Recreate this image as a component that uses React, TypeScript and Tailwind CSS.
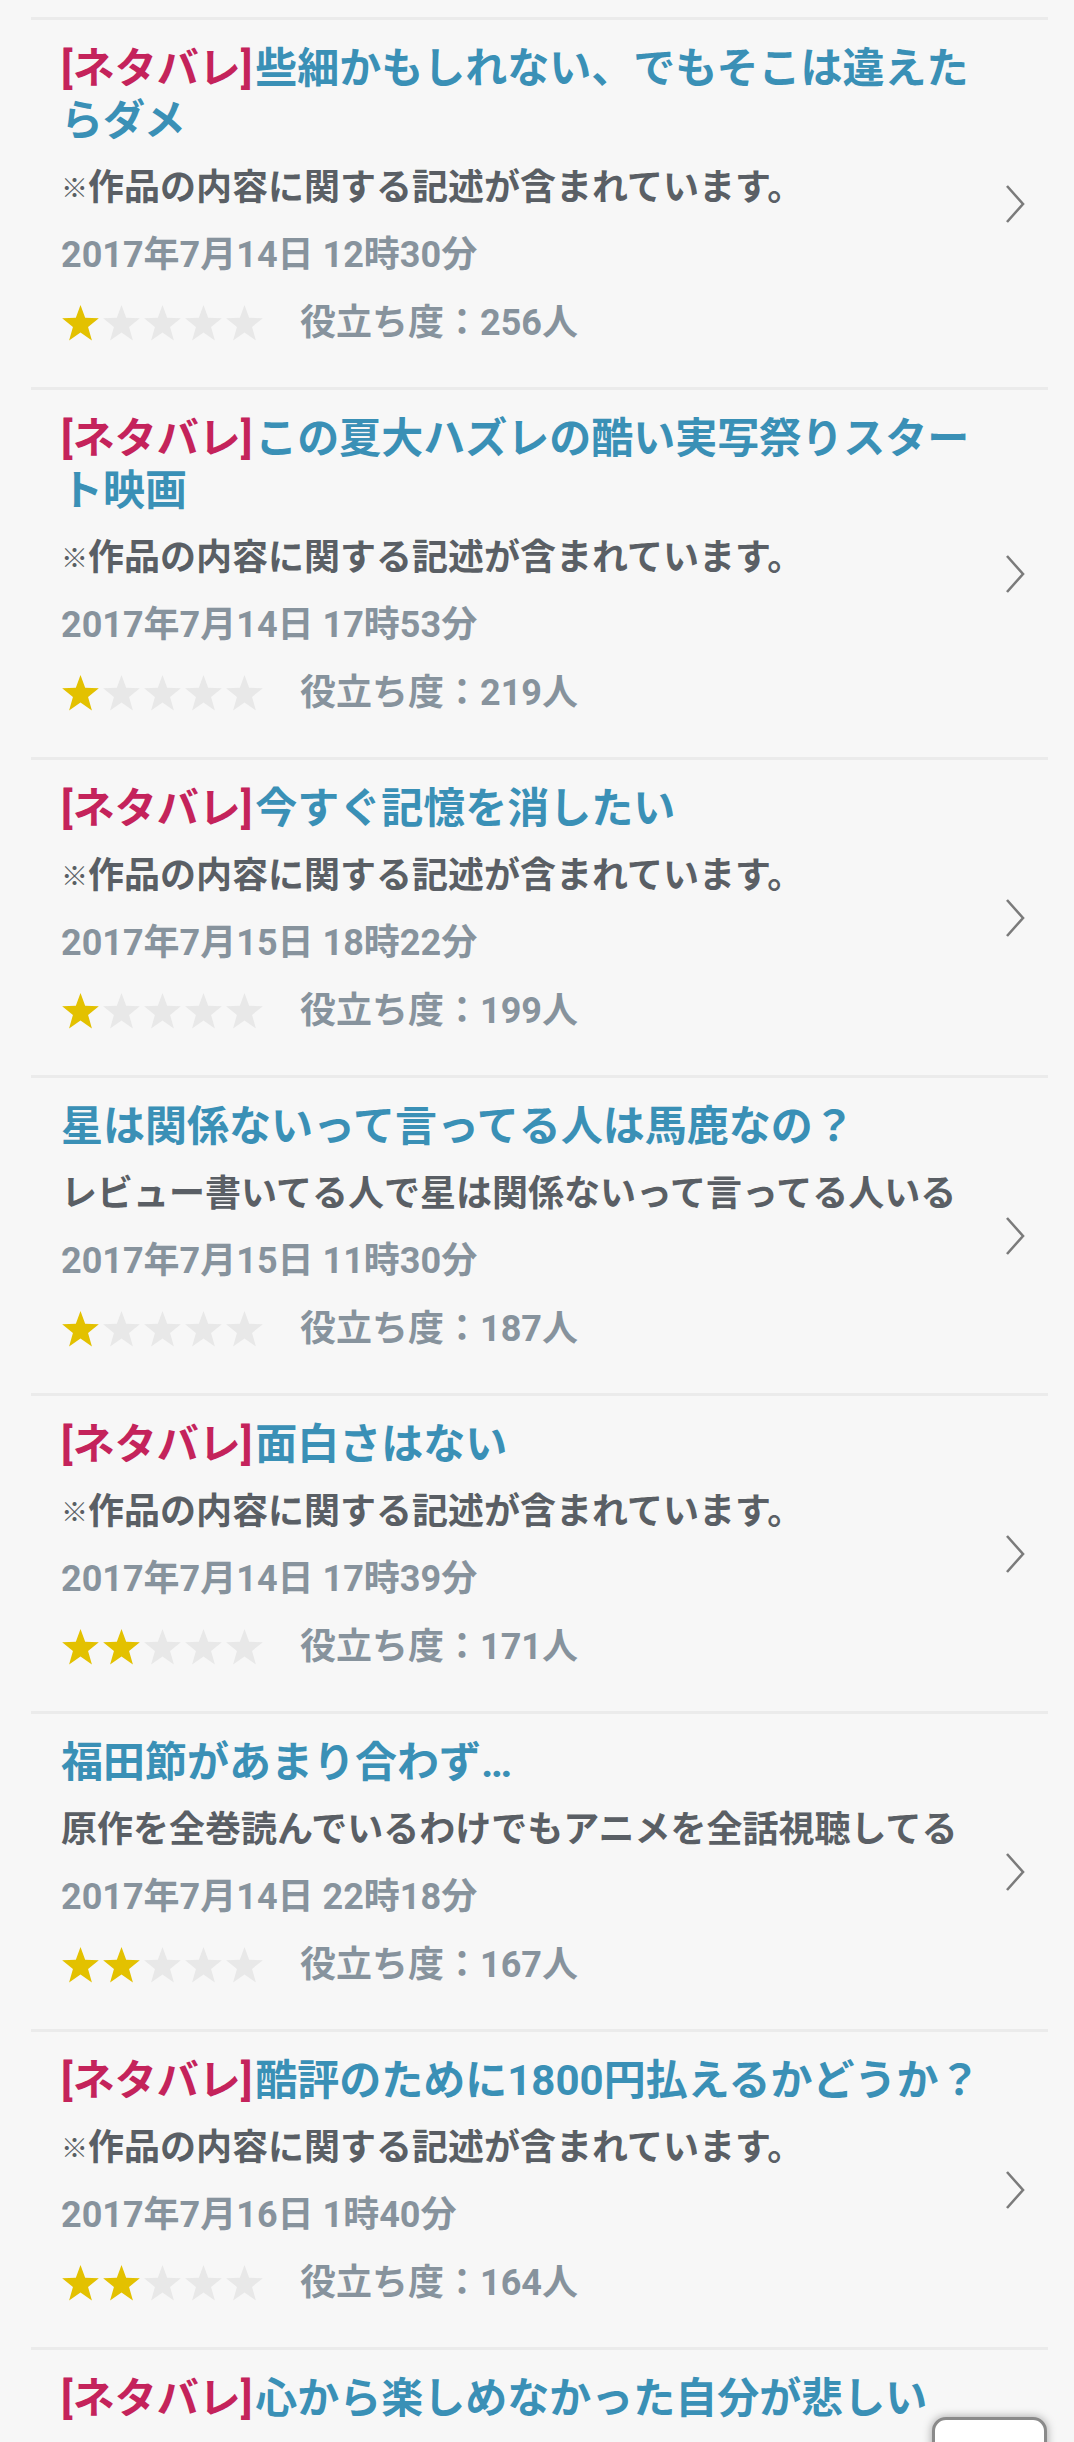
import React from 'react';

interface Review {
  id: number;
  spoiler: boolean;
  title: string;
  body: string;
  date: string;
  stars: number;
  helpful: number;
}

const SPOILER_NOTE = '※作品の内容に関する記述が含まれています。';

const reviews: Review[] = [
  { id: 1, spoiler: true, title: '些細かもしれない、でもそこは違えたらダメ', body: SPOILER_NOTE, date: '2017年7月14日 12時30分', stars: 1, helpful: 256 },
  { id: 2, spoiler: true, title: 'この夏大ハズレの酷い実写祭りスタート映画', body: SPOILER_NOTE, date: '2017年7月14日 17時53分', stars: 1, helpful: 219 },
  { id: 3, spoiler: true, title: '今すぐ記憶を消したい', body: SPOILER_NOTE, date: '2017年7月15日 18時22分', stars: 1, helpful: 199 },
  { id: 4, spoiler: false, title: '星は関係ないって言ってる人は馬鹿なの？', body: 'レビュー書いてる人で星は関係ないって言ってる人いる', date: '2017年7月15日 11時30分', stars: 1, helpful: 187 },
  { id: 5, spoiler: true, title: '面白さはない', body: SPOILER_NOTE, date: '2017年7月14日 17時39分', stars: 2, helpful: 171 },
  { id: 6, spoiler: false, title: '福田節があまり合わず…', body: '原作を全巻読んでいるわけでもアニメを全話視聴してる', date: '2017年7月14日 22時18分', stars: 2, helpful: 167 },
  { id: 7, spoiler: true, title: '酷評のために1800円払えるかどうか？', body: SPOILER_NOTE, date: '2017年7月16日 1時40分', stars: 2, helpful: 164 },
  { id: 8, spoiler: true, title: '心から楽しめなかった自分が悲しい', body: SPOILER_NOTE, date: '2017年7月15日 9時12分', stars: 2, helpful: 158 },
];

function Star({ filled }: { filled: boolean }) {
  return (
    <svg width="39" height="37" viewBox="0 0 24 23" className="shrink-0">
      <polygon
        points="12,0 14.9,8 23.4,8.3 16.7,13.6 19.1,22 12,17.1 4.9,22 7.3,13.6 0.6,8.3 9.1,8"
        fill={filled ? '#e3c100' : '#e8e8e8'}
      />
    </svg>
  );
}

function Chevron() {
  return (
    <svg width="22" height="40" viewBox="0 0 22 40" className="shrink-0">
      <polyline points="3,2 19,20 3,38" fill="none" stroke="#7b7b7b" strokeWidth="2.6" />
    </svg>
  );
}

function Body({ text }: { text: string }) {
  if (text.startsWith('※')) {
    return (
      <>
        <span className="text-[27px] leading-none align-[2px]">※</span>
        {text.slice(1)}
      </>
    );
  }
  return <>{text}</>;
}

function ReviewRow({ review }: { review: Review }) {
  return (
    <div className="border-t-[3px] border-[#ebebeb] flex items-center pl-[30px] pr-[22px]">
      <div className="w-[935px] pt-[23px] pb-[39px]">
        <h3 className="text-[42px] leading-[52px] font-bold text-[#3a90b6]">
          {review.spoiler && <span className="text-[#c4235b] mr-[3px]">[ネタバレ]</span>}
          {review.title}
        </h3>
        <p className="mt-[16px] h-[50px] text-[36px] leading-[50px] font-bold text-[#5a5f65] whitespace-nowrap">
          <Body text={review.body} />
        </p>
        <p className="mt-[17px] h-[50px] text-[36px] leading-[50px] font-bold text-[#87939d]">{review.date}</p>
        <div className="mt-[18px] h-[50px] flex items-center">
          <div className="flex items-center gap-[2px]">
            {[0, 1, 2, 3, 4].map((i) => (
              <Star key={i} filled={i < review.stars} />
            ))}
          </div>
          <span className="ml-[36px] text-[36px] font-bold text-[#87939d]">役立ち度：{review.helpful}人</span>
        </div>
      </div>
      <div className="ml-auto">
        <Chevron />
      </div>
    </div>
  );
}

export default function App() {
  return (
    <div className="min-h-screen bg-[#f7f7f7] font-['Roboto','Noto_Sans_CJK_JP',sans-serif] overflow-hidden">
      <div className="pt-[17px] pl-[31px] pr-[26px]">
        {reviews.map((r) => (
          <ReviewRow key={r.id} review={r} />
        ))}
      </div>

      {/* floating button, cut off by the bottom edge */}
      <div className="fixed right-[27px] top-[2417px] w-[115px] h-[115px] bg-white border-[3px] border-[#8a8a8a] rounded-[14px] shadow-[0_0_10px_rgba(0,0,0,0.35)]" />
    </div>
  );
}
